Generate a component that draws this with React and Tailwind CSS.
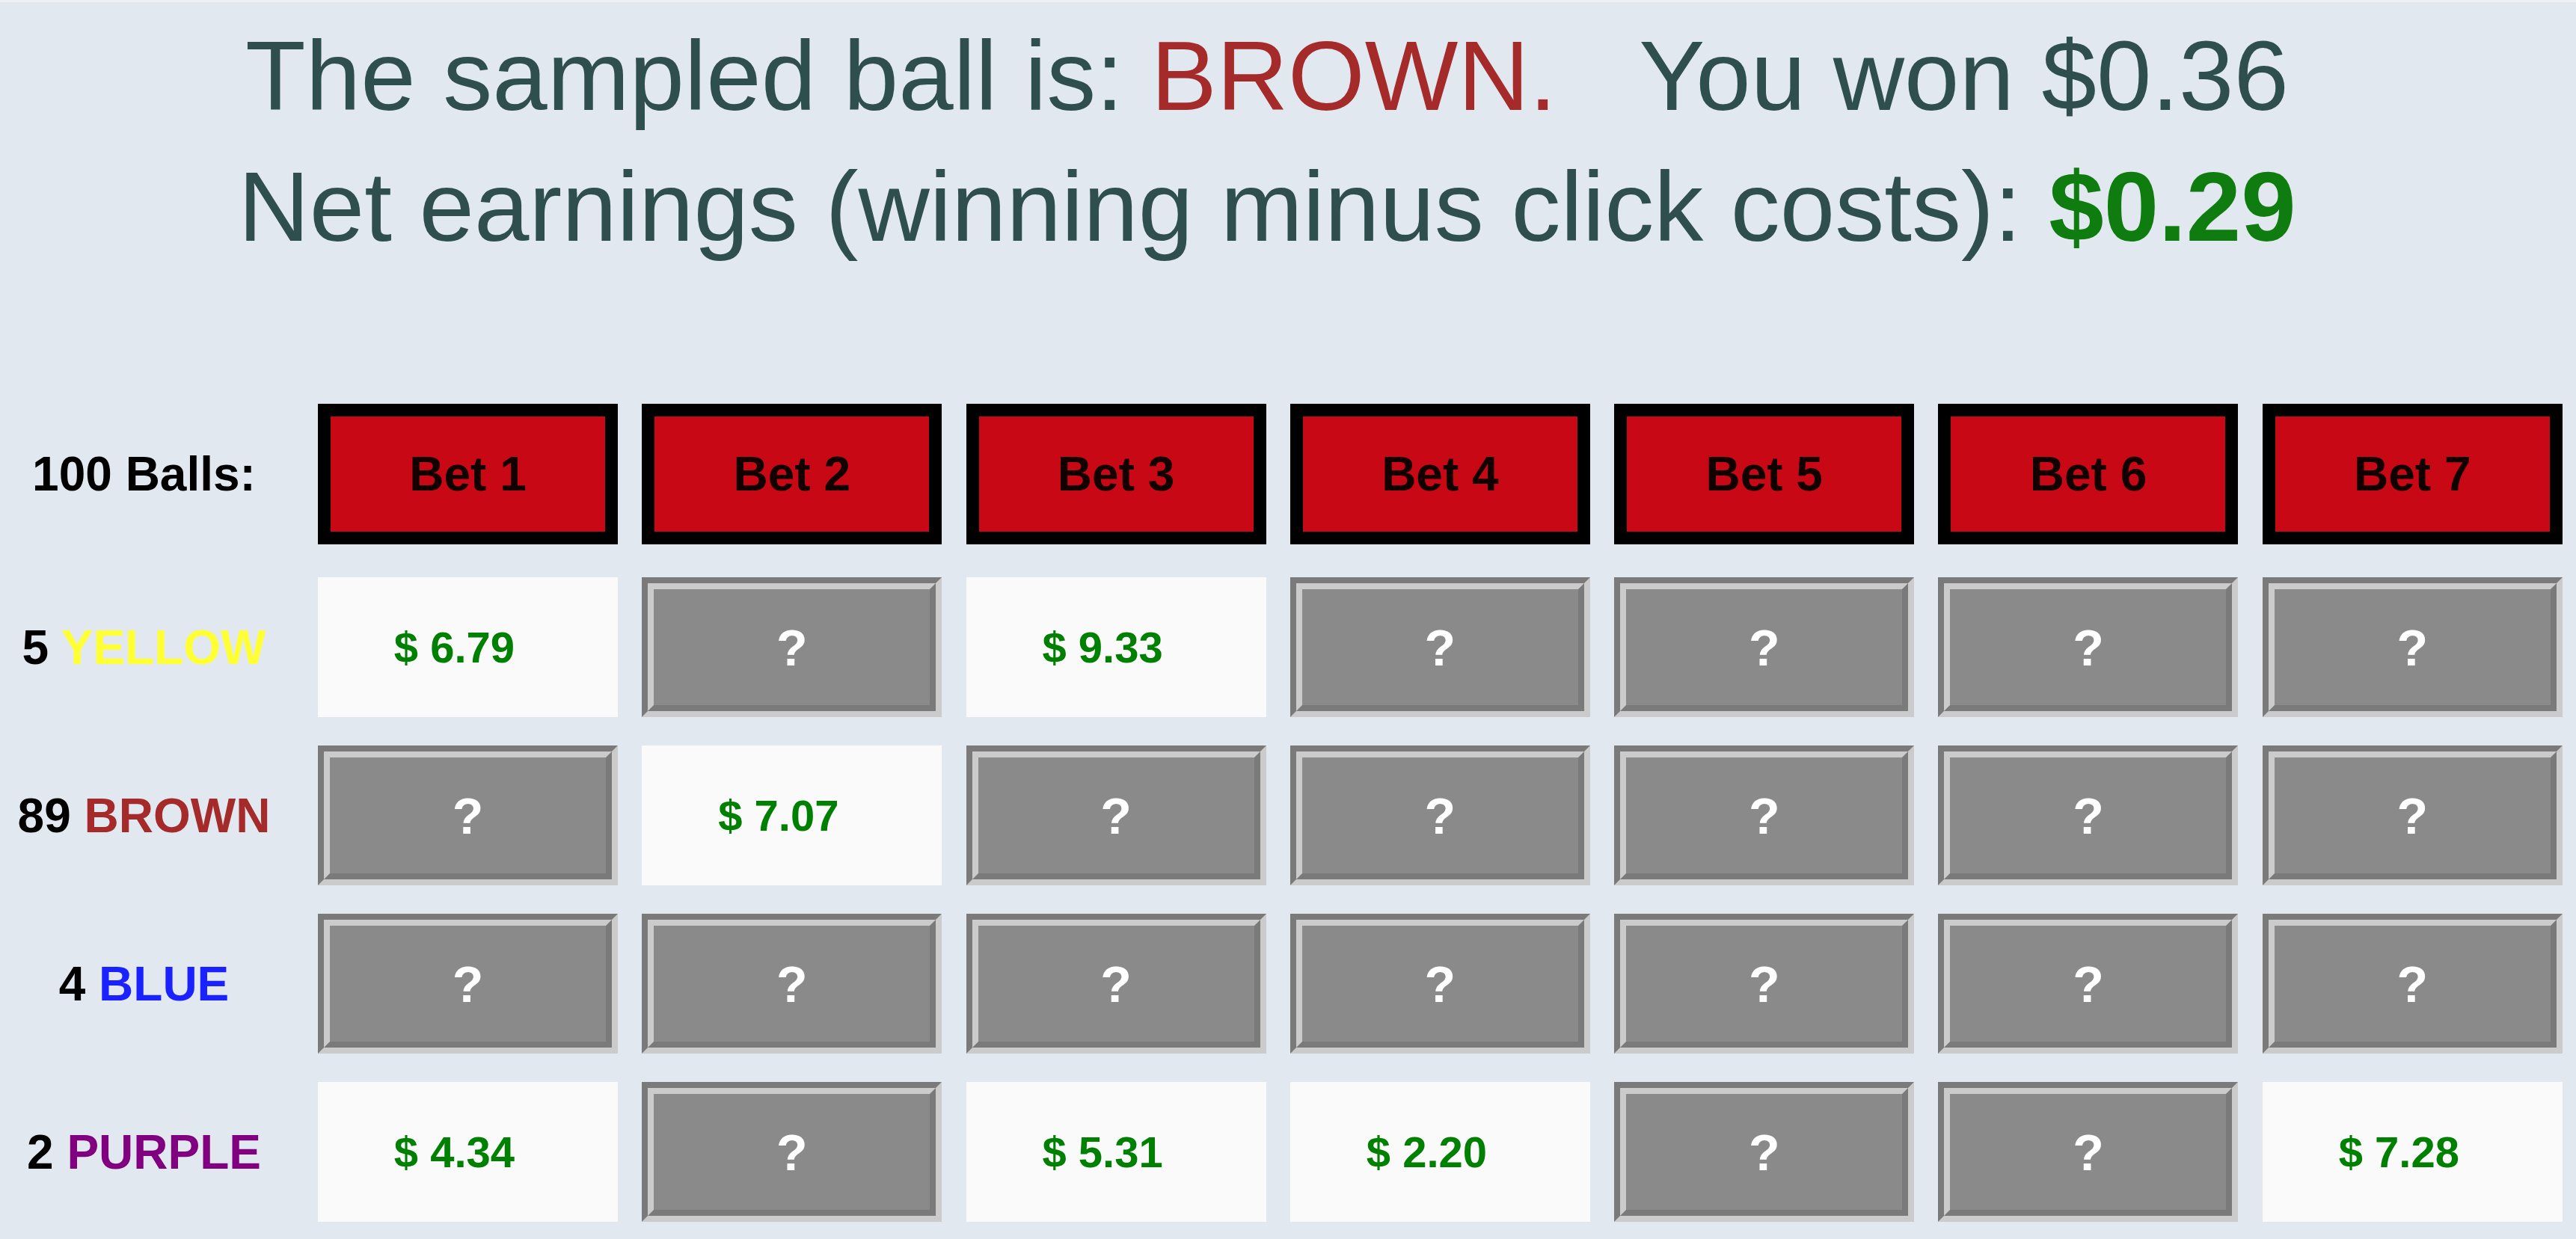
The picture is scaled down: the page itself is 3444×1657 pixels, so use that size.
const FONT = "font-['Liberation_Sans',Arial,Helvetica,sans-serif]";

const rows = [
  { count: 5, name: "YELLOW", color: "text-[#ffff33]", cells: ["6.79", null, "9.33", null, null, null, null] },
  { count: 89, name: "BROWN", color: "text-[#a52a2a]", cells: [null, "7.07", null, null, null, null, null] },
  { count: 4, name: "BLUE", color: "text-[#1a22ff]", cells: [null, null, null, null, null, null, null] },
  { count: 2, name: "PURPLE", color: "text-[#800080]", cells: ["4.34", null, "5.31", "2.20", null, null, "7.28"] },
];

function BetHeader({ n }) {
  return (
    <div className="h-[188px] border-[17px] border-black bg-[#c80815] flex items-center justify-center">
      <span className="text-[64px] font-bold text-[#120000] leading-none">Bet {n}</span>
    </div>
  );
}

function Revealed({ value }) {
  return (
    <div className="h-[187px] bg-[#fafafa] flex items-center justify-center pr-[36px]">
      <span className="text-[58px] font-bold text-[#008000] leading-none">$ {value}</span>
    </div>
  );
}

function Hidden() {
  // double bevel: sunk outer edge, raised inner edge
  return (
    <div className="h-[187px] border-[8px] border-t-[#7a7a7a] border-l-[#7a7a7a] border-b-[#cbcbcb] border-r-[#cbcbcb]">
      <div className="h-full border-[8px] border-t-[#cbcbcb] border-l-[#cbcbcb] border-b-[#7a7a7a] border-r-[#7a7a7a] bg-[#8a8a8a] flex items-center justify-center">
        <span className="text-[68px] font-bold text-white leading-none">?</span>
      </div>
    </div>
  );
}

export default function App() {
  return (
    <div className={`min-h-screen w-full bg-[#e2e8f0] border-t-[3px] border-[#eef1f5] ${FONT}`}>
      {/* Result summary */}
      <div className="pt-[11px] pr-[56px] text-center text-[132px] leading-[175px] text-[#2f4f4f]">
        <p>
          The sampled ball is: <span className="text-[#a52a2a]">BROWN.</span>
          {"\u00a0\u00a0\u00a0"}You won $0.36
        </p>
        <p>
          Net earnings (winning minus click costs):{" "}
          <span className="font-bold text-[#0e7c0e]">$0.29</span>
        </p>
      </div>

      {/* Bets table */}
      <div className="mt-[176px] flex flex-col">
        <div className="flex items-center">
          <div className="w-[385px] mr-[40px] text-center text-[64px] font-bold text-black">100 Balls:</div>
          <div className="grid grid-cols-[repeat(7,401px)] gap-x-[32.3px]">
            {[1, 2, 3, 4, 5, 6, 7].map((n) => (
              <BetHeader key={n} n={n} />
            ))}
          </div>
        </div>

        <div className="mt-[44px] flex flex-col gap-y-[38px]">
          {rows.map((row) => (
            <div key={row.name} className="flex items-center">
              <div className="w-[385px] mr-[40px] text-center text-[64px] font-bold text-black">
                {row.count} <span className={row.color}>{row.name}</span>
              </div>
              <div className="grid grid-cols-[repeat(7,401px)] gap-x-[32.3px]">
                {row.cells.map((v, i) => (v ? <Revealed key={i} value={v} /> : <Hidden key={i} />))}
              </div>
            </div>
          ))}
        </div>
      </div>
    </div>
  );
}
